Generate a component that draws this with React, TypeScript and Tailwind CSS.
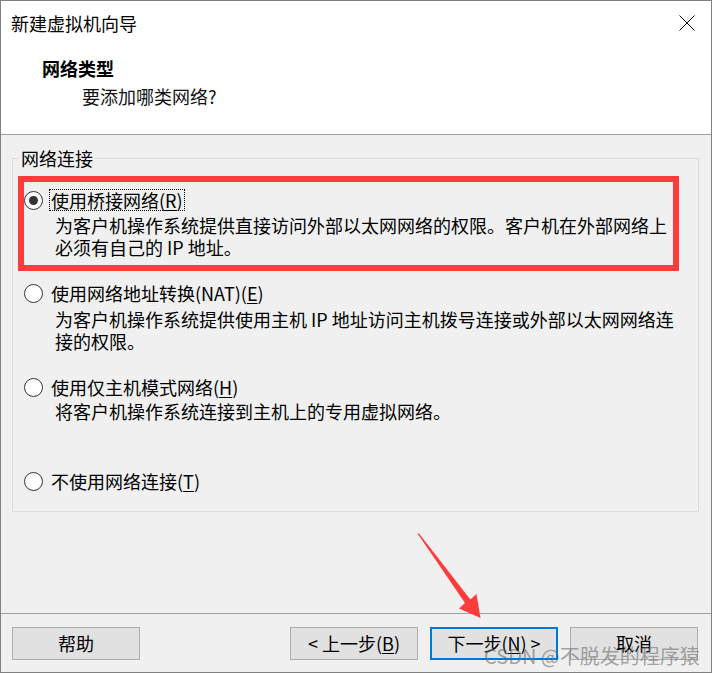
import React from "react";

function Radio({ checked }: { checked?: boolean }) {
  return (
    <span className="w-[19px] h-[19px] rounded-full border-[1.5px] border-[#333333] bg-white flex items-center justify-center shrink-0">
      {checked && <span className="w-[9px] h-[9px] rounded-full bg-[#333333]" />}
    </span>
  );
}

function Option({
  checked,
  focused,
  label,
  desc,
  descMt,
}: {
  checked?: boolean;
  focused?: boolean;
  label: React.ReactNode;
  desc?: string[];
  descMt?: string;
}) {
  return (
    <div className="flex flex-col">
      <div className="flex items-center h-[22px] pl-[11px] gap-[6px]">
        <Radio checked={checked} />
        <span
          className={
            "h-[22px] leading-[20px] pl-[1px] pr-[1px] border " +
            (focused ? "border-dotted border-black" : "border-transparent")
          }
        >
          {label}
        </span>
      </div>
      {desc && (
        <div className={"pl-[42px] leading-[22px] " + (descMt ?? "mt-[3px]")}>
          {desc.map((d, i) => (
            <div key={i} className="whitespace-nowrap">
              {d}
            </div>
          ))}
        </div>
      )}
    </div>
  );
}

function Btn({ children, primary }: { children: React.ReactNode; primary?: boolean }) {
  return (
    <div
      className={
        "w-[128px] h-[33px] bg-[#e1e1e1] flex items-center justify-center text-[18px] text-black " +
        (primary ? "border-2 border-[#0078d7]" : "border border-[#adadad]")
      }
    >
      {children}
    </div>
  );
}

export default function App() {
  return (
    <div className="relative w-[712px] h-[673px] border border-[#808080] bg-[#f0f0f0] flex flex-col font-['Noto_Sans_CJK_SC','Noto_Sans',sans-serif] text-[18px] text-black overflow-hidden">
      {/* Header */}
      <div className="h-[133px] bg-white flex flex-col shrink-0">
        <div className="h-[43px] flex items-center justify-between pl-[10px] pr-[16px]">
          <span className="leading-[22px]">新建虚拟机向导</span>
          <svg width="16" height="16" viewBox="0 0 16 16">
            <path d="M0.5 0.5 L15.5 15.5 M15.5 0.5 L0.5 15.5" stroke="#000" strokeWidth="1" fill="none" />
          </svg>
        </div>
        <div className="pl-[41px] pt-[12px] leading-[24px] font-bold">网络类型</div>
        <div className="pl-[81px] mt-[4px] leading-[24px] text-[#111]">要添加哪类网络?</div>
      </div>
      <div className="h-px bg-[#a0a0a0] shrink-0" />

      {/* Body */}
      <div className="h-[478px] shrink-0 pt-[23px] pl-[11px] pr-[12px]">
        <div className="relative h-[354px] border border-[#dcdcdc] flex flex-col pt-[30px]">
          <span className="absolute left-[6px] top-[-12px] px-[2px] bg-[#f0f0f0] leading-[22px]">网络连接</span>
          <Option
            checked
            focused
            label={
              <>
                使用桥接网络(<span className="underline underline-offset-2">R</span>)
              </>
            }
            desc={["为客户机操作系统提供直接访问外部以太网网络的权限。客户机在外部网络上", "必须有自己的 IP 地址。"]}
          />
          <div className="h-[24px]" />
          <Option
            label={
              <>
                使用网络地址转换(NAT)(<span className="underline underline-offset-2">E</span>)
              </>
            }
            desc={["为客户机操作系统提供使用主机 IP 地址访问主机拨号连接或外部以太网网络连", "接的权限。"]}
            descMt="mt-[4px]"
          />
          <div className="h-[24px]" />
          <Option
            label={
              <>
                使用仅主机模式网络(<span className="underline underline-offset-2">H</span>)
              </>
            }
            desc={["将客户机操作系统连接到主机上的专用虚拟网络。"]}
            descMt="mt-[2px]"
          />
          <div className="h-[48px]" />
          <Option
            label={
              <>
                不使用网络连接(<span className="underline underline-offset-2">T</span>)
              </>
            }
          />
        </div>
      </div>
      <div className="h-px bg-[#a0a0a0] shrink-0" />

      {/* Footer */}
      <div className="flex-1 flex items-start justify-between pt-[13px] pl-[11px] pr-[13px]">
        <Btn>帮助</Btn>
        <div className="flex gap-[12px]">
          <Btn>
            &lt; 上一步(<span className="underline underline-offset-2">B</span>)
          </Btn>
          <Btn primary>
            下一步(<span className="underline underline-offset-2">N</span>) &gt;
          </Btn>
          <Btn>取消</Btn>
        </div>
      </div>

      {/* Annotation: red rectangle */}
      <div className="absolute left-[17px] top-[175px] w-[661px] h-[95px] border-[6px] border-[#ff3c3c] pointer-events-none" />

      {/* Annotation: red arrow */}
      <svg className="absolute left-0 top-0 pointer-events-none" width="712" height="673" viewBox="0 0 712 673">
        <polygon
          points="416.5,532.5 417.8,532.2 469.4,598.5 475.5,593 479.5,617 458,607.5 464,602"
          fill="#ff3c3c"
        />
      </svg>

      {/* Watermark */}
      <span className="absolute left-[483px] top-[641px] text-[20px] leading-[28px] text-[rgba(110,110,110,0.6)] whitespace-nowrap pointer-events-none">
        CSDN @不脱发的程序猿
      </span>
    </div>
  );
}
